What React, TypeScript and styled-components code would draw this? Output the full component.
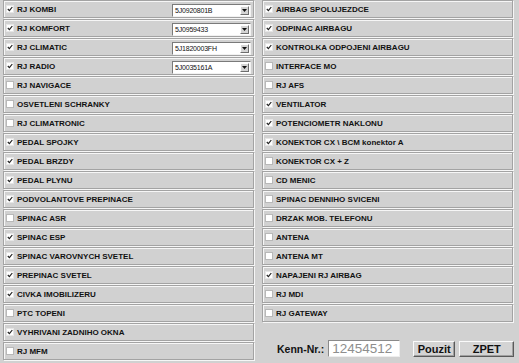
import React from 'react';
import styled, { createGlobalStyle } from 'styled-components';

const GlobalStyle = createGlobalStyle`
  html, body {
    margin: 0;
    padding: 0;
    background: #d1d1d1;
  }
  body {
    font-family: "Liberation Sans", Arial, sans-serif;
    color: #111;
  }
`;

const Page = styled.div`
  width: 519px;
  height: 363px;
  box-sizing: border-box;
  padding: 0 0 0 3px;
  display: grid;
  grid-template-columns: 251px 251px;
  column-gap: 8px;
  overflow: hidden;
`;

const Column = styled.div`
  display: flex;
  flex-direction: column;
  gap: 1px;
`;

const Row = styled.div`
  height: 18px;
  box-sizing: border-box;
  border: 1px solid #a3a3a3;
  box-shadow: inset 1px 1px 0 #f6f6f6, 1px 1px 0 #f6f6f6;
  display: flex;
  align-items: center;
  padding: 0 2px 0 2px;
`;

const Box = styled.span<{ $checked: boolean }>`
  width: 6px;
  height: 6px;
  flex: none;
  background: #fff;
  border: 1px solid ${p => (p.$checked ? '#e6e6e6' : '#b8b8b8')};
  display: flex;
  align-items: center;
  justify-content: center;
`;

const Label = styled.span`
  margin-left: 3px;
  font-size: 8px;
  font-weight: bold;
  white-space: nowrap;
`;

const Select = styled.div`
  margin-left: auto;
  margin-top: 2px;
  width: 79px;
  height: 13px;
  box-sizing: border-box;
  background: #fff;
  border: 1px solid;
  border-color: #7a7a7a #f2f2f2 #f2f2f2 #7a7a7a;
  display: flex;
  align-items: center;
`;

const SelectText = styled.span`
  flex: 1;
  padding-left: 2px;
  font-size: 7px;
  letter-spacing: -0.2px;
`;

const Arrow = styled.span`
  width: 9px;
  height: 9px;
  margin-right: 1px;
  box-sizing: border-box;
  background: #d4d4d4;
  border: 1px solid;
  border-color: #fff #6e6e6e #6e6e6e #fff;
  display: flex;
  align-items: center;
  justify-content: center;
`;

const Footer = styled.div`
  margin-top: 17px;
  padding-left: 15px;
  display: flex;
  align-items: center;
  & > * {
    flex: none;
  }
`;

const KennLabel = styled.span`
  font-size: 10.5px;
  font-weight: bold;
  white-space: nowrap;
  margin-right: 4px;
`;

const KennInput = styled.div`
  width: 72px;
  height: 17px;
  box-sizing: border-box;
  background: #fff;
  border: 1px solid;
  border-color: #8a8a8a #eeeeee #eeeeee #8a8a8a;
  color: #8e8e8e;
  font-size: 13.5px;
  line-height: 15px;
  padding-left: 3px;
  white-space: nowrap;
  overflow: hidden;
`;

const Button = styled.div<{ $width: number; $gap: number }>`
  width: ${p => p.$width}px;
  height: 16px;
  margin-left: ${p => p.$gap}px;
  box-sizing: border-box;
  background: #d4d4d4;
  border: 1px solid;
  border-color: #fafafa #5a5a5a #5a5a5a #fafafa;
  box-shadow: inset -1px -1px 0 #a0a0a0;
  font-size: 11px;
  font-weight: bold;
  display: flex;
  align-items: center;
  justify-content: center;
`;

type Item = { label: string; checked: boolean; select?: string };

const left: Item[] = [
  { label: 'RJ KOMBI', checked: true, select: '5J0920801B' },
  { label: 'RJ KOMFORT', checked: true, select: '5J0959433' },
  { label: 'RJ CLIMATIC', checked: true, select: '5J1820003FH' },
  { label: 'RJ RADIO', checked: true, select: '5J0035161A' },
  { label: 'RJ NAVIGACE', checked: false },
  { label: 'OSVETLENI SCHRANKY', checked: false },
  { label: 'RJ CLIMATRONIC', checked: false },
  { label: 'PEDAL SPOJKY', checked: true },
  { label: 'PEDAL BRZDY', checked: true },
  { label: 'PEDAL PLYNU', checked: true },
  { label: 'PODVOLANTOVE PREPINACE', checked: true },
  { label: 'SPINAC ASR', checked: false },
  { label: 'SPINAC ESP', checked: true },
  { label: 'SPINAC VAROVNYCH SVETEL', checked: true },
  { label: 'PREPINAC SVETEL', checked: true },
  { label: 'CIVKA IMOBILIZERU', checked: true },
  { label: 'PTC TOPENI', checked: false },
  { label: 'VYHRIVANI ZADNIHO OKNA', checked: true },
  { label: 'RJ MFM', checked: false },
];

const right: Item[] = [
  { label: 'AIRBAG SPOLUJEZDCE', checked: true },
  { label: 'ODPINAC AIRBAGU', checked: true },
  { label: 'KONTROLKA ODPOJENI AIRBAGU', checked: true },
  { label: 'INTERFACE MO', checked: false },
  { label: 'RJ AFS', checked: false },
  { label: 'VENTILATOR', checked: true },
  { label: 'POTENCIOMETR NAKLONU', checked: true },
  { label: 'KONEKTOR CX \\ BCM konektor A', checked: true },
  { label: 'KONEKTOR CX + Z', checked: false },
  { label: 'CD MENIC', checked: false },
  { label: 'SPINAC DENNIHO SVICENI', checked: false },
  { label: 'DRZAK MOB. TELEFONU', checked: false },
  { label: 'ANTENA', checked: false },
  { label: 'ANTENA MT', checked: false },
  { label: 'NAPAJENI RJ AIRBAG', checked: true },
  { label: 'RJ MDI', checked: false },
  { label: 'RJ GATEWAY', checked: false },
];

const OptionRow: React.FC<{ item: Item }> = ({ item }) => (
  <Row>
    <Box $checked={item.checked}>
      {item.checked && (
        <svg width="6" height="6" viewBox="0 0 6 6">
          <path d="M0.8 3 L2.4 4.7 L5.3 1" fill="none" stroke="#222" strokeWidth="1.2" />
        </svg>
      )}
    </Box>
    <Label>{item.label}</Label>
    {item.select && (
      <Select>
        <SelectText>{item.select}</SelectText>
        <Arrow>
          <svg width="5" height="3" viewBox="0 0 5 3">
            <path d="M0 0 H5 L2.5 3 Z" fill="#111" />
          </svg>
        </Arrow>
      </Select>
    )}
  </Row>
);

export default function App() {
  return (
    <>
      <GlobalStyle />
      <Page>
        <Column>
          {left.map(item => <OptionRow key={item.label} item={item} />)}
        </Column>
        <Column>
          {right.map(item => <OptionRow key={item.label} item={item} />)}
          <Footer>
            <KennLabel>Kenn-Nr.:</KennLabel>
            <KennInput>12454512</KennInput>
            <Button $width={42} $gap={13}>Pouzit</Button>
            <Button $width={55} $gap={4}>ZPET</Button>
          </Footer>
        </Column>
      </Page>
    </>
  );
}
